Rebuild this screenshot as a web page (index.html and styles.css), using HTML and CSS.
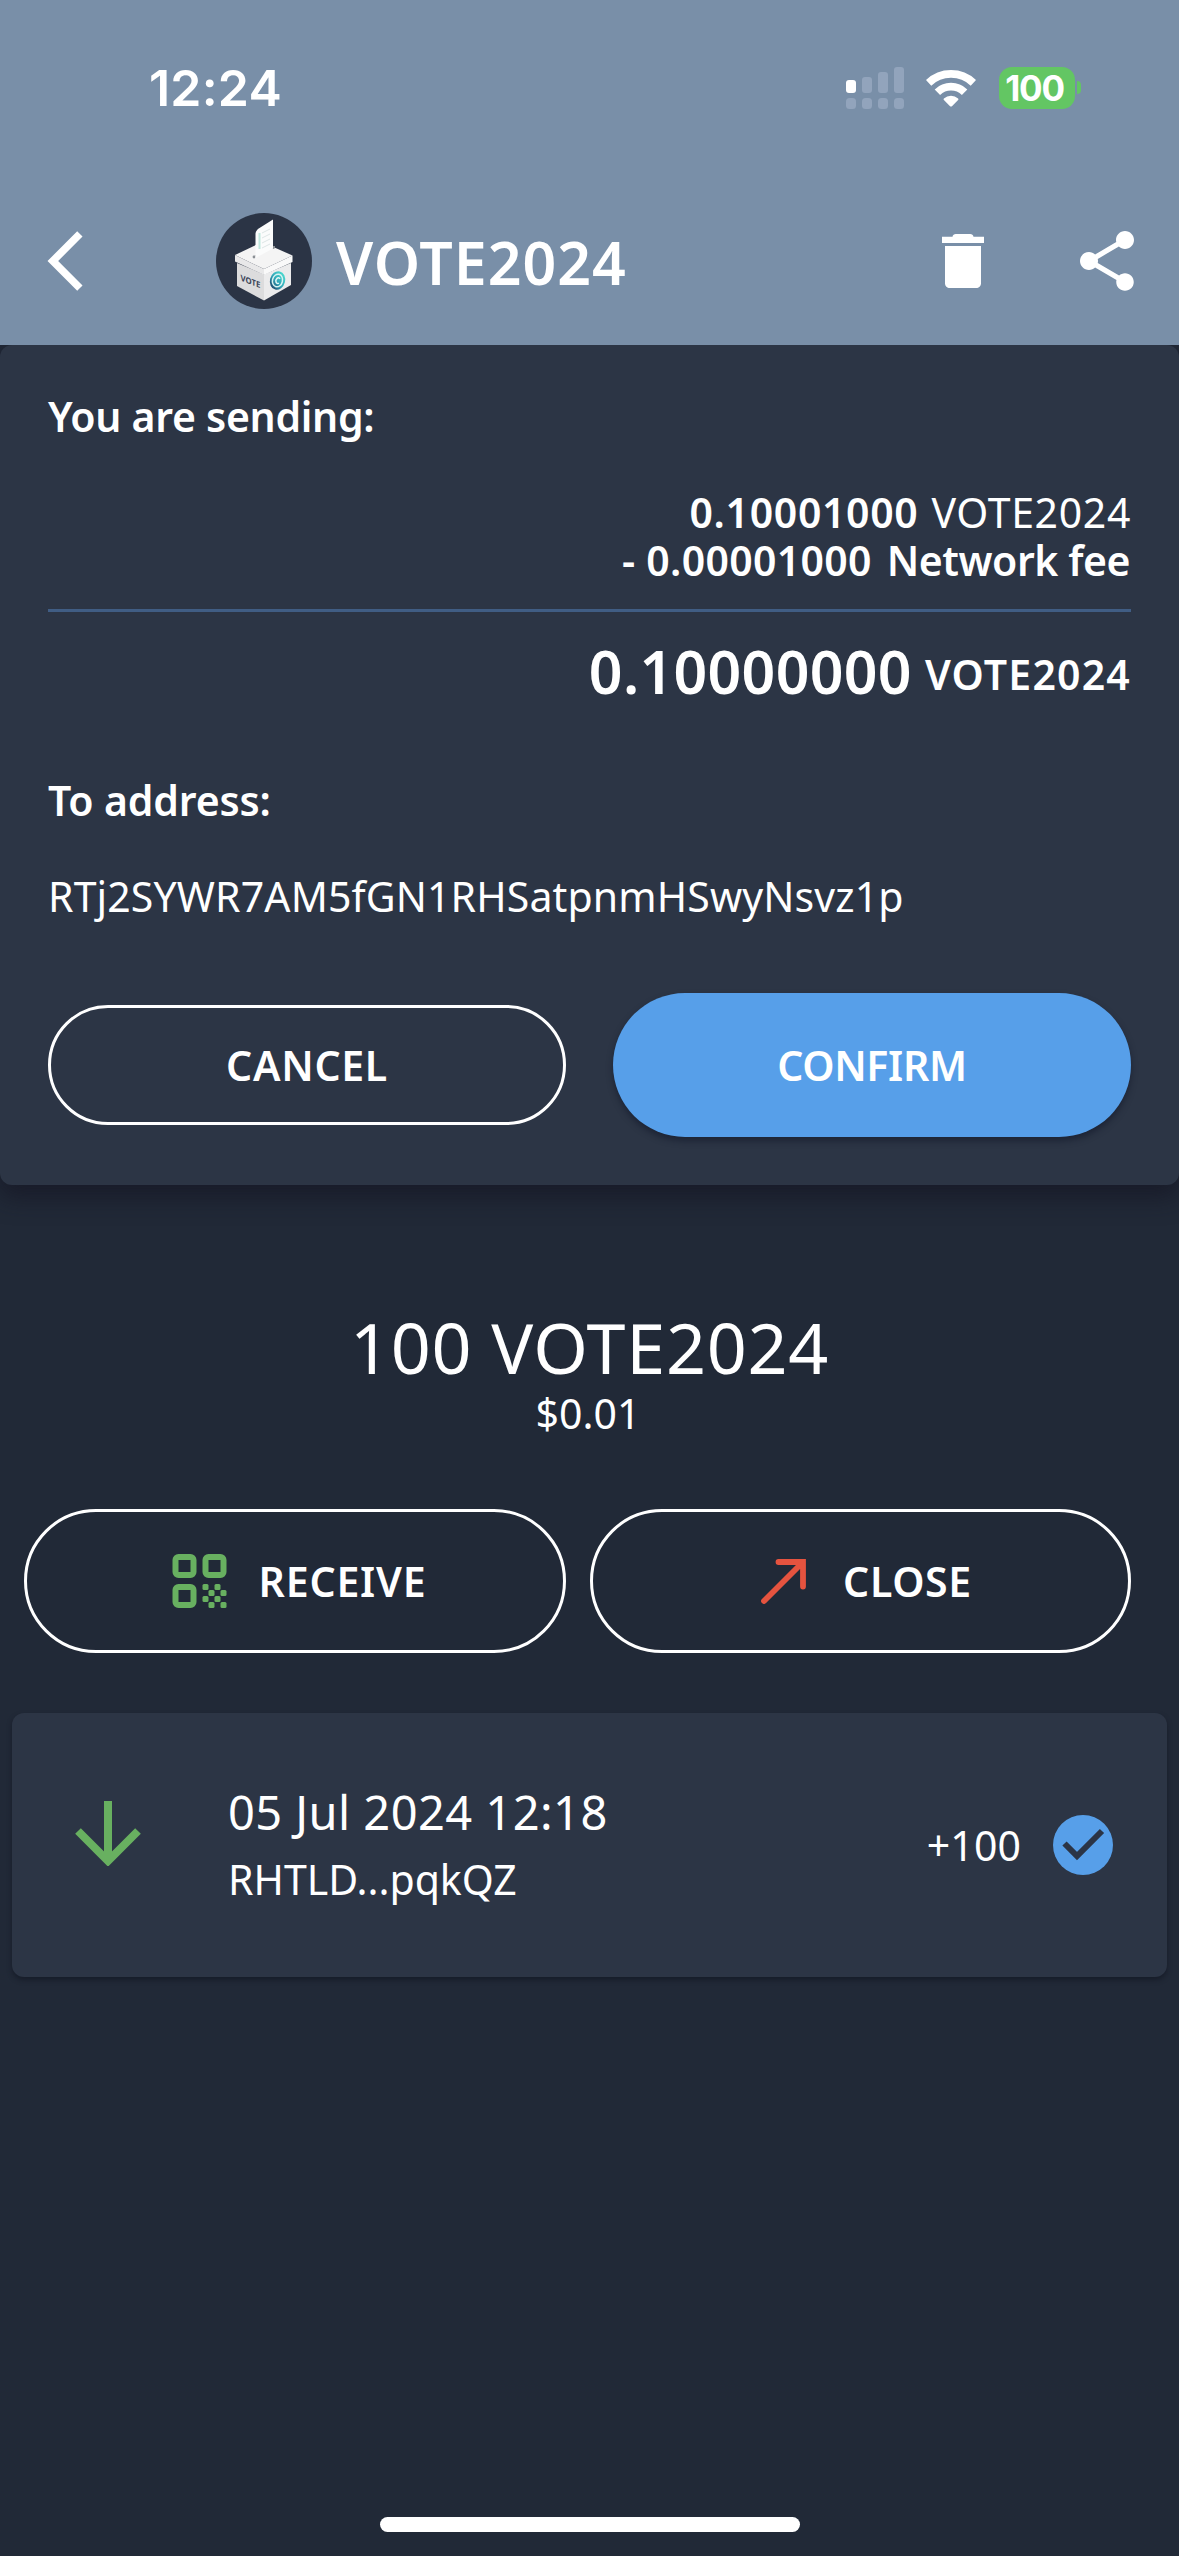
FILE: index.html
```
<!DOCTYPE html>
<html lang="en">
<head>
<meta charset="utf-8">
<title>VOTE2024</title>
<link rel="stylesheet" href="styles.css">
</head>
<body>
<div class="screen">
  <header class="header">
    <div class="status">
      <span class="clock">12:24</span>
      <div class="status-icons">
        <svg class="signal" width="58" height="42" viewBox="0 0 58 42">
          <g fill="#92a4bc">
            <rect x="16" y="10" width="10" height="16" rx="3"/>
            <rect x="32" y="5" width="10" height="21" rx="3"/>
            <rect x="48" y="0" width="10" height="26" rx="3"/>
            <rect x="0" y="31" width="10" height="11" rx="3.5"/>
            <rect x="16" y="31" width="10" height="11" rx="3.5"/>
            <rect x="32" y="31" width="10" height="11" rx="3.5"/>
            <rect x="48" y="31" width="10" height="11" rx="3.5"/>
          </g>
          <rect x="0" y="13" width="10" height="13" rx="3" fill="#fff"/>
        </svg>
        <svg class="wifi" width="50" height="38" viewBox="0 0 50 38">
          <g fill="none" stroke="#fff" stroke-width="7.8">
            <path d="M2.6 13.8A32.5 32.5 0 0 1 47.4 13.8"/>
            <path d="M11.4 23.2A19.6 19.6 0 0 1 38.6 23.2"/>
          </g>
          <path d="M17.9 29.4A10.8 10.8 0 0 1 32.1 29.4Q32.9 30.2 32.1 31L26.2 36.9Q25 38 23.8 36.9L17.9 31Q17.1 30.2 17.9 29.4Z" fill="#fff"/>
        </svg>
        <div class="battery"><span class="battery-body">100</span><span class="battery-tip"></span></div>
      </div>
    </div>
    <nav class="nav">
      <svg class="icon back" viewBox="0 0 24 24"><path d="M17.51 3.87L15.73 2.1 5.84 12l9.9 9.9 1.77-1.77L9.38 12l8.13-8.13z"/></svg>
      <svg class="logo" width="96" height="96" viewBox="0 0 96 96">
        <defs>
          <linearGradient id="coin" x1="0.8" y1="0" x2="0.2" y2="1"><stop offset="0" stop-color="#4fe0d2"/><stop offset="0.55" stop-color="#2fa5b8"/><stop offset="1" stop-color="#1d3b63"/></linearGradient>
        </defs>
        <circle cx="48" cy="48" r="48" fill="#2b3445"/>
        <path d="M21 50L48 61.500L48 87.500L21 73Z" fill="#dcdcdd"/>
        <path d="M48 61.500L75 50L75 72L48 87.500Z" fill="#ebebec"/>
        <path d="M19 42L46 29L76.500 42.500L48 56Z" fill="#f4f4f4"/>
        <path d="M19 42L48 56L48 62L19 48.500Z" fill="#e8e8e9"/>
        <path d="M48 56L76.500 42.500L76.500 49L48 62Z" fill="#f9f9f9"/>
        <path d="M37 44L59 33.500" stroke="#b4b7bb" stroke-width="1"/>
        <circle cx="38" cy="44" r="1.400" fill="#8b9095"/>
        <circle cx="57.500" cy="34.500" r="1.400" fill="#8b9095"/>
        <path d="M39.500 45V20.500Q40 17 43.500 15L57 6.500V35.500Z" fill="#fbfcfc"/>
        <path d="M43.500 20v16" stroke="#bfe8de" stroke-width="2"/>
        <path d="M46 20l8-4M46 25l8-4M46 30l8-4M46 35l8-4" stroke="#dde6e6" stroke-width="1"/>
        <text class="box-label" transform="matrix(.92 .36 0 1 24.500 67.500)">VOTE</text>
        <g transform="translate(61.500 67.500) rotate(14)">
          <ellipse rx="7.600" ry="9.400" fill="url(#coin)"/>
          <ellipse rx="5" ry="6.400" fill="none" stroke="#d9f3f1" stroke-width="1.500"/>
          <path d="M2-2.300A2.200 2.900 0 1 0 2 2.300" fill="none" stroke="#e4f7f5" stroke-width="1.500"/>
        </g>
      </svg>
      <h1 class="title">VOTE2024</h1>
      <svg class="icon trash" viewBox="0 0 24 24"><path d="M6 19.400C6 20.300 6.700 21 7.600 21h8.800c.9 0 1.600-.7 1.600-1.600V7H6v12.400zM19 3.900h-3.500c-.1-.6-.5-.9-1.100-.9H9.600c-.6 0-1 .3-1.100.9H5V6h14V3.900z"/></svg>
      <svg class="icon share" viewBox="0 0 24 24"><path d="M18 16.080c-.76 0-1.440.3-1.960.77L8.910 12.700c.05-.23.09-.46.09-.7s-.04-.47-.09-.7l7.050-4.110c.54.5 1.250.81 2.040.81 1.660 0 3-1.340 3-3s-1.340-3-3-3-3 1.340-3 3c0 .24.04.47.09.7L8.040 9.810C7.500 9.310 6.790 9 6 9c-1.660 0-3 1.340-3 3s1.340 3 3 3c.79 0 1.500-.31 2.040-.81l7.120 4.160c-.05.21-.08.43-.08.65 0 1.610 1.310 2.920 2.920 2.920s2.920-1.310 2.920-2.920-1.310-2.920-2.920-2.920z"/></svg>
    </nav>
  </header>

  <main>
    <section class="confirm-panel">
      <h2 class="label sending">You are sending:</h2>
      <div class="row">
        <span class="amount">0.10001000</span>
        <span class="unit-light">VOTE2024</span>
      </div>
      <div class="row fee">
        <span class="fee-amount">- 0.00001000</span>
        <span class="fee-name">Network fee</span>
      </div>
      <div class="divider"></div>
      <div class="row total">
        <span class="total-amount">0.10000000</span>
        <span class="unit">VOTE2024</span>
      </div>
      <h2 class="label to">To address:</h2>
      <p class="address">RTj2SYWR7AM5fGN1RHSatpnmHSwyNsvz1p</p>
      <div class="panel-actions">
        <button class="button cancel">CANCEL</button>
        <button class="button confirm">CONFIRM</button>
      </div>
    </section>

    <section class="balance">
      <p class="balance-amount">100 VOTE2024</p>
      <p class="balance-fiat">$0.01</p>
    </section>

    <div class="actions">
      <button class="button receive">
        <svg width="55" height="54" viewBox="0 0 55 54">
          <g fill="none" stroke="#68b060" stroke-width="6">
            <rect x="3.500" y="3" width="18" height="18" rx="3"/>
            <rect x="33.500" y="3" width="18" height="18" rx="3"/>
            <rect x="3.500" y="33" width="18" height="18" rx="3"/>
          </g>
          <g fill="#68b060">
            <rect x="30.500" y="30" width="6" height="6" rx="1.500"/><rect x="42.500" y="30" width="6" height="6" rx="1.500"/>
            <rect x="36.500" y="36" width="6" height="6" rx="1.500"/><rect x="48.500" y="36" width="6" height="6" rx="1.500"/>
            <rect x="30.500" y="42" width="6" height="6" rx="1.500"/><rect x="42.500" y="42" width="6" height="6" rx="1.500"/>
            <rect x="36.500" y="48" width="6" height="6" rx="1.500"/><rect x="48.500" y="48" width="6" height="6" rx="1.500"/>
          </g>
        </svg>
        <span>RECEIVE</span>
      </button>
      <button class="button close">
        <svg width="45" height="45" viewBox="0 0 45 45"><path d="M3 42L41 4M17.500 3H42V27.500" fill="none" stroke="#e5533f" stroke-width="5.800" stroke-linecap="round" stroke-linejoin="miter"/></svg>
        <span>CLOSE</span>
      </button>
    </div>

    <article class="transaction">
      <svg class="incoming" width="66" height="65" viewBox="0 0 66 65"><path d="M33 0V58M3 30L33 60L63 30" fill="none" stroke="#68b060" stroke-width="8"/></svg>
      <div class="details">
        <p class="date">05 Jul 2024 12:18</p>
        <p class="peer">RHTLD...pqkQZ</p>
      </div>
      <span class="delta">+100</span>
      <svg class="check" width="60" height="60" viewBox="0 0 60 60"><circle cx="30" cy="30" r="30" fill="#579fe9"/><path d="M11.500 28.500L24 41L49 16" fill="none" stroke="#2b3445" stroke-width="6"/></svg>
    </article>
  </main>

  <div class="home-bar"></div>
</div>
</body>
</html>
```
FILE: styles.css
```
* { box-sizing: border-box; margin: 0; padding: 0; }

body {
  width: 1179px;
  background: #212937;
  color: #fff;
  font: 400 41px/48px "Noto Sans", "Open Sans", sans-serif;
}

.screen {
  display: flex;
  flex-direction: column;
  height: 2556px;
  overflow: hidden;
}

/* Header */
.header { position: relative; z-index: 1; height: 345px; background: #798fa8; }

.status {
  display: flex;
  align-items: center;
  justify-content: space-between;
  height: 177px;
  padding: 0 98px 2px 149px;
}

.clock { font: 600 50px/60px Inter, sans-serif; letter-spacing: .2px; }

.status-icons { display: flex; align-items: center; }
.wifi { margin: 0 23px 0 22px; }

.battery { display: flex; align-items: center; gap: 2px; }
.battery-body {
  width: 76px;
  height: 42px;
  border-radius: 13px;
  background: #63c663;
  font: 700 35px/42px Inter, sans-serif;
  letter-spacing: -1.2px;
  text-align: center;
  padding-right: 5px;
}
.battery-tip { width: 4px; height: 13px; border-radius: 0 4px 4px 0; background: #63c663; }

.nav { display: flex; align-items: center; height: 168px; padding: 0 36px 0 30px; }
.icon { width: 72px; height: 72px; fill: #fff; flex: none; }
.logo { margin-left: 114px; flex: none; }
.box-label { font: 700 8.500px "Noto Sans", sans-serif; fill: #3b4558; }
.title {
  flex: 1;
  margin-left: 24px;
  padding-top: 1px;
  font-weight: 600;
  font-size: 59px;
  line-height: 72px;
  letter-spacing: .99px;
}
.share { margin-left: 72px; }

/* Send confirmation */
.confirm-panel {
  padding: 47px 48px 48px;
  border-radius: 12px;
  background: #2c3545;
  box-shadow: 0 10px 24px 2px rgba(20, 20, 34, .65);
}

.label { font-weight: 600; font-size: 41px; line-height: 48px; }
.sending { letter-spacing: -.3px; }
.row { display: flex; justify-content: flex-end; align-items: baseline; height: 48px; gap: 13px; }
.sending + .row { margin-top: 48px; }
.amount { font-weight: 600; letter-spacing: .65px; }
.unit-light { letter-spacing: .65px; }
.fee { font-weight: 600; gap: 15px; }
.fee-amount { letter-spacing: .3px; }
.fee-name { letter-spacing: -.45px; padding-right: 1px; }
.divider { height: 3px; margin-top: 25px; background: #405d84; }
.total { height: 72px; margin-top: 23px; align-items: flex-end; font-weight: 600; gap: 13px; }
.total-amount { font-size: 59px; line-height: 72px; letter-spacing: .3px; }
.unit { margin-bottom: 9px; letter-spacing: 1.200px; }
.to { margin-top: 69px; letter-spacing: -.15px; }
.address { margin-top: 48px; letter-spacing: .13px; }

.button {
  display: flex;
  align-items: center;
  justify-content: center;
  border: 3px solid #fff;
  border-radius: 72px;
  background: none;
  color: #fff;
  font: 600 41px/48px "Noto Sans", "Open Sans", sans-serif;
}

.panel-actions { display: flex; align-items: center; justify-content: space-between; margin-top: 73px; }
.panel-actions .button { width: 518px; }
.cancel { height: 120px; letter-spacing: .7px; }
.panel-actions .confirm {
  height: 144px;
  border: 0;
  background: #579fe9;
  letter-spacing: -.3px;
  box-shadow: 0 4px 6px rgba(16, 22, 40, .55);
}

/* Balance */
.balance { margin-top: 120px; text-align: center; }
.balance-amount { font-size: 70px; line-height: 84px; letter-spacing: .75px; }
.balance-fiat { padding-right: 3px; }

.actions { display: grid; grid-template-columns: 542px 541px; gap: 24px; margin: 72px 48px 0 24px; }
.actions .button { height: 144px; }
.receive { letter-spacing: .8px; gap: 32px; }
.receive svg { margin-left: 8px; }
.close { letter-spacing: .7px; gap: 37px; }
.close svg { margin-left: 12px; }

/* Transaction */
.transaction {
  display: flex;
  align-items: center;
  height: 264px;
  margin: 60px 12px 0;
  padding: 0 54px 0 63px;
  border-radius: 12px;
  background: #2c3545;
  box-shadow: 0 3px 5px rgba(14, 18, 30, .55);
}
.incoming { margin-bottom: 24px; }
.details { flex: 1; margin: 0 0 5px 87px; }
.date { font-size: 47px; line-height: 60px; letter-spacing: .45px; }
.peer { margin-top: 13px; letter-spacing: 0; }
.delta { letter-spacing: .1px; margin-right: 32px; }

.home-bar { width: 420px; height: 15px; margin: auto auto 24px; border-radius: 8px; background: #fff; }
```
